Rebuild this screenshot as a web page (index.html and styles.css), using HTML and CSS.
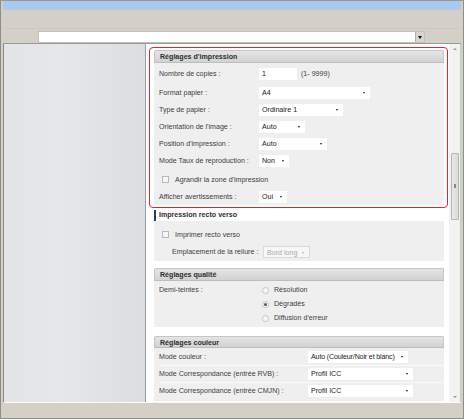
FILE: index.html
```html
<!DOCTYPE html>
<html lang="fr">
<head>
    <meta charset="utf-8">
    <link rel="stylesheet" href="styles.css">
</head>
<body>
    <div class="window">
        <div class="titlebar"></div>

        <div class="toolbar">
            <div class="toolbar-top"></div>
            <div class="toolbar-row">
                <div class="combo"><span class="combo-btn"></span></div>
            </div>
        </div>

        <div class="main">
            <aside class="sidebar"></aside>

            <div class="content">
                <!-- Highlighted block -->
                <div class="highlight">
                    <section class="panel">
                        <h2 class="panel-head">Réglages d'impression</h2>
                        <div class="panel-body print-body">
                            <div class="row first"><span class="lbl">Nombre de copies :</span><span class="field">1</span><span class="hint">(1- 9999)</span></div>
                            <div class="row"><span class="lbl">Format papier :</span><span class="sel sel-format">A4</span></div>
                            <div class="row"><span class="lbl">Type de papier :</span><span class="sel sel-type">Ordinaire 1</span></div>
                            <div class="row"><span class="lbl">Orientation de l'image :</span><span class="sel sel-orient">Auto</span></div>
                            <div class="row"><span class="lbl">Position d'impression :</span><span class="sel sel-pos">Auto</span></div>
                            <div class="row"><span class="lbl">Mode Taux de reproduction :</span><span class="sel sel-taux">Non</span></div>
                            <div class="row check-row"><span class="chk"></span><span class="chk-lbl">Agrandir la zone d'impression</span></div>
                            <div class="row"><span class="lbl">Afficher avertissements :</span><span class="sel sel-warn">Oui</span></div>
                        </div>
                    </section>
                </div>

                <section class="panel recto">
                    <h2 class="recto-head">Impression recto verso</h2>
                    <div class="panel-body recto-body">
                        <div class="row"><span class="chk"></span><span class="chk-lbl">Imprimer recto verso</span></div>
                        <div class="row indent"><span class="lbl lbl-reliure">Emplacement de la reliure :</span><span class="sel sel-bord disabled">Bord long</span></div>
                    </div>
                </section>

                <section class="panel quality">
                    <h2 class="panel-head">Réglages qualité</h2>
                    <div class="panel-body quality-body">
                        <span class="lbl lbl-demi">Demi-teintes :</span>
                        <div class="radios">
                            <div class="radio-row"><span class="radio"></span>Résolution</div>
                            <div class="radio-row"><span class="radio on"></span>Dégradés</div>
                            <div class="radio-row"><span class="radio"></span>Diffusion d'erreur</div>
                        </div>
                    </div>
                </section>

                <section class="panel colour">
                    <h2 class="panel-head">Réglages couleur</h2>
                    <div class="panel-body colour-body">
                        <div class="row"><span class="lbl lbl-wide">Mode couleur :</span><span class="sel sel-mode">Auto (Couleur/Noir et blanc)</span></div>
                        <div class="row"><span class="lbl lbl-wide">Mode Correspondance (entrée RVB) :</span><span class="sel sel-icc">Profil ICC</span></div>
                        <div class="row"><span class="lbl lbl-wide">Mode Correspondance (entrée CMJN) :</span><span class="sel sel-icc">Profil ICC</span></div>
                    </div>
                </section>
            </div>

            <div class="scrollbar">
                <span class="arrow-up"></span>
                <span class="thumb"></span>
                <span class="arrow-down"></span>
            </div>
        </div>

        <div class="statusbar"></div>
    </div>
</body>
</html>
```

FILE: styles.css
```css
/* Page frame */
html, body {
    margin: 0;
    padding: 0;
}

body {
    width: 464px;
    height: 419px;
    overflow: hidden;
    background: #d4d0c8;
    font-family: "Liberation Sans", Arial, sans-serif;
    font-size: 7.1px;
    color: #404040;
}

.window {
    box-sizing: border-box;
    width: 464px;
    height: 419px;
    border: 1px solid #8e8c87;
    border-top-color: #9a9894;
    padding: 0 2px 2px 2px;
    display: flex;
    flex-direction: column;
}

.titlebar {
    height: 9px;
    background: #a9c9ef;
}

.toolbar {
    height: 33px;
    display: flex;
    flex-direction: column;
    border-bottom: 1px solid #9b9994;
}

.toolbar-top {
    height: 19px;
    border-bottom: 1px solid #cdc9c1;
}

.toolbar-row {
    flex: 1;
    padding: 2px 0 0 35px;
}

.combo {
    position: relative;
    width: 385px;
    height: 10px;
    background: #fff;
    border: 1px solid #c4c0b8;
    box-sizing: content-box;
}

.combo-btn {
    position: absolute;
    right: 0;
    top: 0;
    width: 8px;
    height: 10px;
    background: #d8d5ce;
    border-left: 1px solid #b0ada6;
}

.combo-btn::after {
    content: "";
    position: absolute;
    left: 2px;
    top: 4px;
    border-left: 2px solid transparent;
    border-right: 2px solid transparent;
    border-top: 3px solid #111;
}

/* Main area */
.main {
    flex: 1;
    display: flex;
    min-height: 0;
    border-left: 1px solid #8c8a86;
    border-bottom: 1px solid #fbfbfa;
}

.sidebar {
    width: 141px;
    background: linear-gradient(to right, #e3e4e5, #e6e7e8 40%, #dcdde0);
    border-right: 1px solid #9d9d9d;
}

.content {
    width: 303px;
    background: #fff;
    overflow: hidden;
    padding-top: 3px;
    box-sizing: border-box;
}

.scrollbar {
    position: relative;
    width: 12px;
    background: #f2f2f2;
    border-right: 1px solid #c9c9c9;
    box-sizing: border-box;
}

.thumb {
    position: absolute;
    left: 2px;
    top: 109px;
    width: 6px;
    height: 65px;
    background: linear-gradient(to right, #e9e9e9, #dadada);
    border: 1px solid #b4b4b4;
    border-radius: 1px;
}

.thumb::after {
    content: "";
    position: absolute;
    left: 2px;
    top: 30px;
    width: 2px;
    height: 4px;
    background: #8a8a8a;
}

.arrow-up, .arrow-down {
    position: absolute;
    left: 4px;
    border-left: 2px solid transparent;
    border-right: 2px solid transparent;
}

.arrow-up {
    top: 4px;
    border-bottom: 2px solid #9a9a9a;
}

.arrow-down {
    bottom: 4px;
    border-top: 2px solid #9a9a9a;
}

.statusbar {
    height: 13px;
}

/* Panels */
.highlight {
    margin: 0 1px 0 3px;
    padding: 2px 3px 2px 4px;
    border: 1px solid #e4242c;
    border-radius: 4px;
}

.panel {
    width: 290px;
}

.recto, .quality, .colour {
    margin-left: 8px;
}

.recto { margin-top: 2px; }
.quality { margin-top: 7px; }
.colour { margin-top: 9px; }

.panel-head {
    margin: 0;
    height: 13px;
    line-height: 13px;
    padding-left: 5px;
    font-size: 7.1px;
    font-weight: bold;
    color: #2e2e2e;
    background: linear-gradient(#e4e4e4, #d2d2d2);
    border: 1px solid #c6c6c6;
    border-bottom-color: #bdbdbd;
    border-radius: 2px 2px 0 0;
    box-sizing: border-box;
}

.colour .panel-head {
    height: 12px;
    line-height: 12px;
}

.recto-head {
    margin: 0;
    height: 11px;
    line-height: 11px;
    padding-left: 3px;
    font-size: 7.1px;
    font-weight: bold;
    color: #2e2e2e;
    background: #fff;
    border-left: 2px solid #1f3e6e;
}

.panel-body {
    background: #efefef;
    padding-left: 5px;
}

.row {
    display: flex;
    align-items: center;
    height: 17px;
    box-sizing: border-box;
}

.print-body { padding-top: 2px; }
.print-body .first { margin-bottom: 2px; }
.check-row { margin-top: 2px; }

.lbl {
    width: 100px;
    flex-shrink: 0;
    white-space: nowrap;
}

/* Controls */
.field, .sel {
    position: relative;
    display: inline-block;
    height: 12px;
    line-height: 12px;
    background: #fff;
    color: #222;
    padding-left: 3px;
    box-sizing: border-box;
    white-space: nowrap;
}

.field { width: 38px; }

.hint {
    margin-left: 4px;
}

.sel::after {
    content: "";
    position: absolute;
    right: 5px;
    top: 5px;
    border-left: 1.5px solid transparent;
    border-right: 1.5px solid transparent;
    border-top: 2px solid #222;
}

.sel-format { width: 111px; }
.sel-type { width: 84px; }
.sel-orient { width: 46px; }
.sel-pos { width: 68px; }
.sel-taux { width: 30px; }
.sel-warn { width: 28px; }
.sel-bord { width: 47px; }
.sel-mode { width: 100px; letter-spacing: -0.15px; }
.sel-icc { width: 105px; }

.sel.disabled {
    color: #a8a8a8;
    border: 1px solid #dadada;
    background: #f7f7f7;
}

.sel.disabled::after {
    border-top-color: #b4b4b4;
}

.chk {
    width: 5px;
    height: 5px;
    margin-left: 3px;
    margin-right: 6px;
    border: 1px solid #b9b9b9;
    background: #f6f6f6;
}

/* Recto verso */
.recto-body {
    padding-top: 5px;
    padding-bottom: 1px;
}

.indent { padding-left: 13px; }
.lbl-reliure { width: 91px; }

/* Qualité */
.quality-body {
    display: flex;
    padding-top: 2px;
    padding-bottom: 2px;
}

.lbl-demi {
    width: 103px;
    height: 14px;
    line-height: 14px;
}

.radio-row {
    display: flex;
    align-items: center;
    height: 14px;
}

.radio {
    position: relative;
    width: 5px;
    height: 5px;
    margin-right: 5px;
    border: 1px solid #c4c4c4;
    border-radius: 50%;
    background: #f6f6f6;
}

.radio.on::after {
    content: "";
    position: absolute;
    left: 1px;
    top: 1px;
    width: 3px;
    height: 3px;
    border-radius: 50%;
    background: #3d5b86;
}

/* Couleur */
.colour-body {
    padding-bottom: 2px;
}

.colour-body .row + .row {
    border-top: 1px solid #fafafa;
}

.lbl-wide { width: 149px; }
```
